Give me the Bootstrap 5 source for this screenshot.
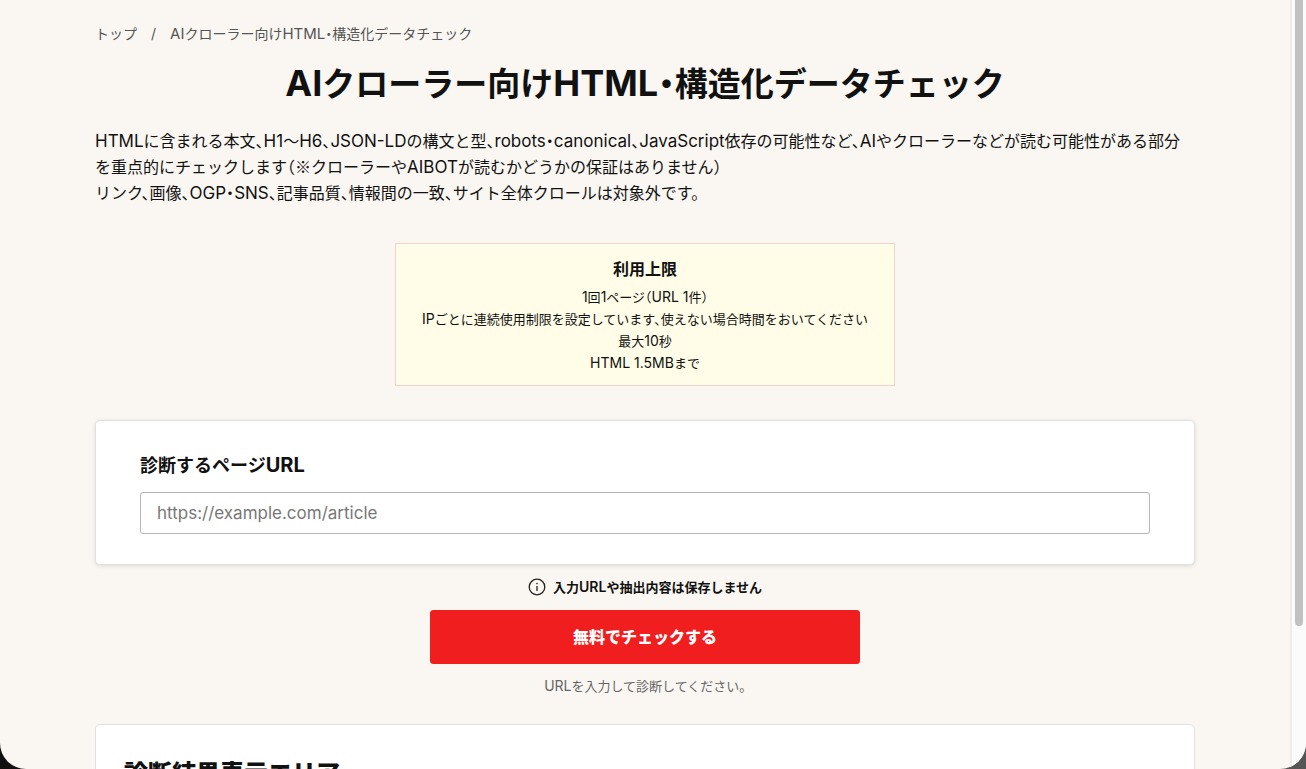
<!DOCTYPE html>
<html lang="ja">
<head>
<meta charset="utf-8">
<meta name="viewport" content="width=device-width, initial-scale=1">
<title>AIクローラー向けHTML・構造化データチェック</title>
<link rel="stylesheet" href="https://cdn.jsdelivr.net/npm/bootstrap@5.3.0/dist/css/bootstrap.min.css">
<style>
  body {
    background: linear-gradient(90deg, #111 50%, #555 50%);
    color: #111;
    font-family: Inter, "Noto Sans CJK JP", sans-serif;
    font-feature-settings: "halt";
    font-size: 16px;
    line-height: 26px;
  }
  /* Latin runs are set one step larger than the kana around them */
  .latin { font-size: 17px; line-height: 1; }
  .crumbs .latin { font-size: 15px; }
  .page-title .latin { font-size: 36px; }
  .limits .latin, .note .latin, .status-text .latin { font-size: 14px; }
  .url-label .latin { font-size: 20px; }
  .kome { font-family: "Noto Sans CJK JP", sans-serif; line-height: 1; }
  .window-frame { background: #faf7f2; border-radius: 0 0 26px 26px; }
  .page-view { min-width: 0; }
  .page-inner { max-width: 1100px; }
  .crumbs { font-size: 14px; line-height: 20px; margin-bottom: 18px; --bs-breadcrumb-item-padding-x: 14px; --bs-breadcrumb-divider-color: #555; --bs-breadcrumb-item-active-color: #555; }
  .crumbs a { color: #555; }
  .page-title { font-size: 33px; line-height: 44px; font-weight: 700; margin-bottom: 22px; }
  .limits { max-width: 500px; padding: 12px 16px 11px; background: #fffde7; border: 1px solid #f6d3ca; font-size: 13px; line-height: 22px; margin-top: 37px; margin-bottom: 34px; }
  .limits h2 { font-size: 16px; line-height: 26px; font-weight: 700; margin-bottom: 4px; }
  .panel { border: 1px solid #e3e1de; border-radius: 5px; }
  .url-panel { padding: 31px 44px 30px; box-shadow: 0 1px 4px rgba(0, 0, 0, .12); }
  .url-label { font-size: 18px; line-height: 28px; font-weight: 700; margin-bottom: 12px; }
  .url-box { height: 42px; padding: 6px 16px; border-color: #b5b5b5; border-radius: 3px; font-size: 17px; }
  .url-box::placeholder { color: #777; }
  .note { font-size: 13px; line-height: 22px; font-weight: 600; margin-top: 11px; margin-bottom: 12px; gap: 7px; }
  .check-btn { max-width: 430px; height: 54px; font-weight: 900; border-radius: 3px; --bs-btn-bg: #f01e1e; --bs-btn-border-color: #f01e1e; --bs-btn-color: #fff; --bs-btn-hover-bg: #d81717; --bs-btn-hover-color: #fff; }
  .status-text { font-size: 13px; line-height: 22px; color: #666; margin-top: 11px; margin-bottom: 27px; }
  .result-panel { padding: 33px 28px; }
  .result-panel h2 { font-size: 24px; line-height: 32px; font-weight: 900; }
  .scroll-track { width: 16px; background: #fbfbfb; border-left: 2px solid #ececec; }
  .scroll-thumb { width: 8px; height: 81.4%; margin-left: 3px; background: #c1c1c1; border-radius: 0 0 4px 4px; }
</style>
</head>
<body>
<div class="window-frame d-flex vh-100 overflow-hidden">
  <div class="page-view flex-fill overflow-hidden">
    <main class="page-inner mx-auto pt-4">
      <nav aria-label="パンくず">
        <ol class="breadcrumb crumbs">
          <li class="breadcrumb-item"><a href="#" class="text-decoration-none">トップ</a></li>
          <li class="breadcrumb-item active" aria-current="page"><span class="latin">AI</span>クローラー向け<span class="latin">HTML</span>・構造化データチェック</li>
        </ol>
      </nav>
      <h1 class="page-title text-center"><span class="latin">AI</span>クローラー向け<span class="latin">HTML</span>・構造化データチェック</h1>
      <p class="mb-0"><span class="latin">HTML</span>に含まれる本文、<span class="latin">H1</span>〜<span class="latin">H6</span>、<span class="latin">JSON-LD</span>の構文と型、<span class="latin">robots</span>・<span class="latin">canonical</span>、<span class="latin">JavaScript</span>依存の可能性など、<span class="latin">AI</span>やクローラーなどが読む可能性がある部分を重点的にチェックします（<span class="kome">※</span>クローラーや<span class="latin">AIBOT</span>が読むかどうかの保証はありません）<br>リンク、画像、<span class="latin">OGP</span>・<span class="latin">SNS</span>、記事品質、情報間の一致、サイト全体クロールは対象外です。</p>

      <section class="limits mx-auto text-center">
        <h2>利用上限</h2>
        <ul class="list-unstyled mb-0">
          <li><span class="latin">1</span>回<span class="latin">1</span>ページ（<span class="latin">URL 1</span>件）</li>
          <li><span class="latin">IP</span>ごとに連続使用制限を設定しています、使えない場合時間をおいてください</li>
          <li>最大<span class="latin">10</span>秒</li>
          <li><span class="latin">HTML 1.5MB</span>まで</li>
        </ul>
      </section>

      <form>
        <div class="panel url-panel bg-white">
          <label class="url-label d-block" for="url">診断するページ<span class="latin">URL</span></label>
          <input class="form-control url-box" type="url" id="url" placeholder="https://example.com/article">
        </div>
        <p class="note d-flex justify-content-center align-items-center">
          <svg width="18" height="18" viewBox="0 0 18 18" fill="none" stroke="#222" stroke-width="1.3" aria-hidden="true"><circle cx="9" cy="9" r="7.8"/><path d="M9 8v5"/><circle cx="9" cy="5.6" r=".8" fill="#222" stroke="none"/></svg>
          <span>入力<span class="latin">URL</span>や抽出内容は保存しません</span>
        </p>
        <button type="button" class="btn check-btn d-block w-100 mx-auto">無料でチェックする</button>
        <p class="status-text text-center"><span class="latin">URL</span>を入力して診断してください。</p>
      </form>

      <section class="panel result-panel bg-white">
        <h2>診断結果表示エリア</h2>
      </section>
    </main>
  </div>
  <div class="scroll-track flex-shrink-0" aria-hidden="true"><div class="scroll-thumb"></div></div>
</div>
<script src="https://cdn.jsdelivr.net/npm/bootstrap@5.3.0/dist/js/bootstrap.bundle.min.js"></script>
</body>
</html>
